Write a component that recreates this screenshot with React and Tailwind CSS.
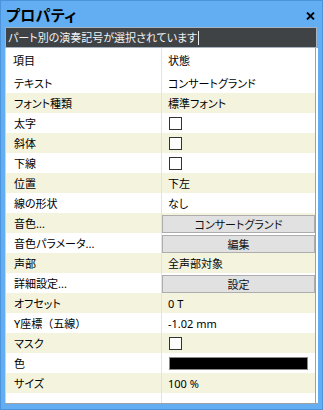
import React from "react";

const rows = [
  { k: "テキスト", v: "コンサートグランド", t: "text" },
  { k: "フォント種類", v: "標準フォント", t: "text" },
  { k: "太字", t: "check" },
  { k: "斜体", t: "check" },
  { k: "下線", t: "check" },
  { k: "位置", v: "下左", t: "text" },
  { k: "線の形状", v: "なし", t: "text" },
  { k: "音色...", v: "コンサートグランド", t: "button" },
  { k: "音色パラメータ...", v: "編集", t: "button" },
  { k: "声部", v: "全声部対象", t: "text" },
  { k: "詳細設定...", v: "設定", t: "button" },
  { k: "オフセット", v: "0 T", t: "text" },
  { k: "Y座標（五線）", v: "-1.02 mm", t: "text", full: true },
  { k: "マスク", t: "check" },
  { k: "色", t: "color" },
  { k: "サイズ", v: "100 %", t: "text" },
];

function Value({ r }) {
  if (r.t === "check")
    return (
      <div className="flex items-center h-full pl-[7px]">
        <div className="w-[13px] h-[13px] border border-[#333333] bg-white" />
      </div>
    );
  if (r.t === "color")
    return (
      <div className="flex items-center h-full pl-[7px]">
        <div className="w-[139px] h-[13px] border border-[#8a8a8a] bg-black" />
      </div>
    );
  if (r.t === "button")
    return (
      <div className="h-full pt-[2px]">
        <div className="h-[18px] w-full border border-[#adadad] bg-[#e1e1e1] flex items-center justify-center text-[#111]">
          {r.v}
        </div>
      </div>
    );
  return <div className="flex items-center h-full pl-[6px]">{r.v}</div>;
}

export default function App() {
  return (
    <div className="w-[323px] h-[410px] bg-[#63aef2] border border-[#4b93da] flex flex-col font-['Noto_Sans','Noto_Sans_CJK_JP',sans-serif] [font-feature-settings:'palt'] text-[11px] text-black leading-none">
      <div className="h-[26px] flex items-center justify-between pl-[5px] pr-[6px] pt-[3px] shrink-0">
        <span className="font-bold text-[15px] tracking-[0.3px]">プロパティ</span>
        <svg width="9" height="8" viewBox="0 0 9 8" className="mr-[1px]">
          <path d="M1 0.5 L8 7.5 M8 0.5 L1 7.5" stroke="#000" strokeWidth="1.8" />
        </svg>
      </div>
      <div className="h-[21px] ml-[4px] mr-[5px] shrink-0 bg-[#3f4346] border border-[#a7b4bf] flex items-center pl-[2px] text-[#f2f2f2]">
        <span>パート別の演奏記号が選択されています</span>
        <span className="ml-[1px] w-[1px] h-[14px] bg-[#e8e8e8]" />
      </div>
      <div className="flex-1 ml-[4px] mr-[4px] mb-[5px] bg-white border-b border-[#a0a0a0] pr-[2px] flex">
        <div className="flex-1 border-l border-[#d5d5d5] border-r border-r-[#a0a0a0] flex flex-col">
          <div className="h-[25px] flex shrink-0">
            <div className="w-[156px] border-r border-[#e3e3e3] flex items-center pl-[7px]">項目</div>
            <div className="flex-1 flex items-center pl-[6px]">状態</div>
          </div>
          {rows.map((r, i) => (
            <div
              key={i}
              className={`h-[20px] flex shrink-0 ${i % 2 === 1 ? "bg-[#f3f3de]" : "bg-white"}`}
            >
              <div className="w-[156px] border-r border-[#e3e3e3] flex items-center pl-[8px]">
                {r.full ? <span className="[font-feature-settings:normal]">{r.k}</span> : r.k}
              </div>
              <div className="flex-1">
                <Value r={r} />
              </div>
            </div>
          ))}
          <div className="flex-1 flex">
            <div className="w-[156px] border-r border-[#e3e3e3]" />
          </div>
        </div>
      </div>
    </div>
  );
}
